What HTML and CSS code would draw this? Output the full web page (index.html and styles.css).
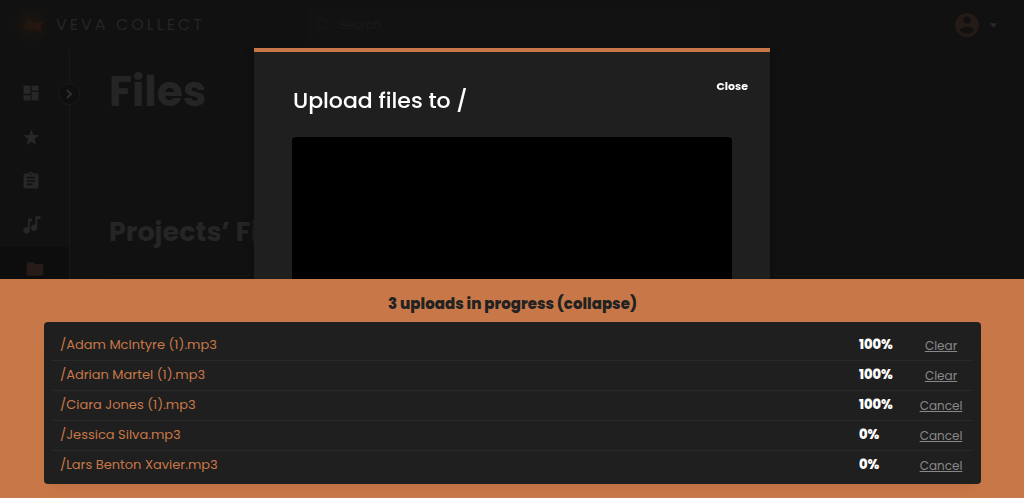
FILE: index.html
```html
<!DOCTYPE html>
<html lang="en">
<head>
<meta charset="utf-8">
<meta name="viewport" content="width=device-width, initial-scale=1">
<title>Files - Veva Collect</title>
<link rel="stylesheet" href="styles.css">
</head>
<body>
<div class="app">
  <header class="topbar">
    <a class="brand" href="#">
      <svg class="brand-mark" viewBox="0 0 48 48" aria-hidden="true">
        <defs>
          <radialGradient id="glow"><stop offset="0" stop-color="#1e150e"/><stop offset="0.5" stop-color="#16120f"/><stop offset="1" stop-color="#111111"/></radialGradient>
          <linearGradient id="spark"><stop offset="0" stop-color="#20180e"/><stop offset="1" stop-color="#271510"/></linearGradient>
        </defs>
        <circle cx="31" cy="24" r="22" fill="url(#glow)"/>
        <path d="M21 25l6-2-1-6 7 5 11-1-4 4 2 7-7-4-4 1-5-2z" fill="url(#spark)"/>
      </svg>
      <span class="brand-name">VEVA COLLECT</span>
    </a>
    <div class="search">
      <svg class="search-icon" viewBox="0 0 14 14" aria-hidden="true"><circle cx="6" cy="6" r="5"/><path d="M10 10l3 3"/></svg>
      <input class="search-input" type="search" placeholder="Search" aria-label="Search">
    </div>
    <button class="account" type="button" aria-label="Account menu">
      <svg class="avatar" viewBox="2 2 20 20" aria-hidden="true"><path d="M12 2a10 10 0 100 20 10 10 0 000-20zm0 3a3 3 0 110 6 3 3 0 010-6zm0 14.200c-2.500 0-4.710-1-6-2.700.03-1.990 4-3.080 6-3.080s5.970 1.090 6 3.080a7.200 7.200 0 01-6 2.700z"/></svg>
      <svg class="caret" viewBox="0 0 8 5" aria-hidden="true"><path d="M0 0h8L4 5z"/></svg>
    </button>
  </header>
  <div class="body">
    <nav class="sidebar" aria-label="Main">
      <a class="nav-item" href="#" aria-label="Dashboard"><svg class="icon" viewBox="0 0 24 24"><path d="M3 13h8.400V3H3zm0 8h8.400v-6.200H3zm9.800 0H21V10.800h-8.200zm0-18v6.200H21V3z"/></svg></a>
      <a class="nav-item" href="#" aria-label="Favorites"><svg class="icon" viewBox="0 0 24 24"><path d="M12.500 17.600l5.800 4-2-7.100 5.800-4.500-7.200-.3L12.500 2.800 10.100 9.700l-7.200.3 5.800 4.500-2 7.100z"/></svg></a>
      <a class="nav-item" href="#" aria-label="Tasks"><svg class="icon" viewBox="0 0 24 24"><path d="M19 3h-4.180C14.400 1.840 13.300 1 12 1s-2.400.84-2.820 2H5c-1.100 0-2 .9-2 2v14c0 1.100.9 2 2 2h14c1.100 0 2-.9 2-2V5c0-1.100-.9-2-2-2zm-7 0c.55 0 1 .45 1 1s-.45 1-1 1-1-.45-1-1 .45-1 1-1zm2 14H7v-2h7v2zm3-4H7v-2h10v2zm0-4H7V7h10v2z"/></svg></a>
      <a class="nav-item" href="#" aria-label="Music"><svg class="icon" viewBox="0 0 24 24"><path d="M8.400 4.200h4.800v3.200h-2.600v10.800a3.900 3.900 0 11-2.200-3.500zM17.200 1.400h6.200v3.400h-3.800v10.400a3.900 3.900 0 11-2.400-3.600z"/></svg></a>
      <a class="nav-item nav-item-active" href="#" aria-label="Files" aria-current="page"><svg class="icon" viewBox="0 0 24 24"><path d="M10 4H4a2 2 0 00-2 2v12c0 1.100.9 2 2 2h16a2 2 0 002-2V8a2 2 0 00-2-2h-8z"/></svg></a>
      <button class="expand" type="button" aria-label="Expand menu"><svg class="chevron" viewBox="0 0 6 10"><path d="M1 1l4 4-4 4"/></svg></button>
    </nav>
    <main class="content">
      <h1 class="page-title">Files</h1>
      <h2 class="section-title">Projects’ Files</h2>
    </main>
  </div>
</div>

<section class="modal" role="dialog" aria-labelledby="modal-title">
  <div class="modal-head">
    <h2 class="modal-title" id="modal-title">Upload files to /</h2>
    <button class="close" type="button">Close</button>
  </div>
  <div class="dropzone"></div>
</section>

<section class="uploads" aria-label="Uploads">
  <button class="uploads-toggle" type="button">3 uploads in progress (collapse)</button>
  <div class="uploads-box">
    <table class="upload-table">
      <tbody>
        <tr><td class="file">/Adam McIntyre (1).mp3</td><td class="percent">100%</td><td class="action"><button class="action-link" type="button">Clear</button></td></tr>
        <tr><td class="file">/Adrian Martel (1).mp3</td><td class="percent">100%</td><td class="action"><button class="action-link" type="button">Clear</button></td></tr>
        <tr><td class="file">/Ciara Jones (1).mp3</td><td class="percent">100%</td><td class="action"><button class="action-link" type="button">Cancel</button></td></tr>
        <tr><td class="file">/Jessica Silva.mp3</td><td class="percent">0%</td><td class="action"><button class="action-link" type="button">Cancel</button></td></tr>
        <tr><td class="file">/Lars Benton Xavier.mp3</td><td class="percent">0%</td><td class="action"><button class="action-link" type="button">Cancel</button></td></tr>
      </tbody>
    </table>
  </div>
</section>
</body>
</html>
```
FILE: styles.css
```css
* { box-sizing: border-box; }

body {
  margin: 0;
  background: #111111;
  color: #252525;
  font-family: Poppins, Inter, sans-serif;
  overflow: hidden;
}

button {
  padding: 0;
  border: 0;
  background: none;
  color: inherit;
  font: inherit;
  cursor: pointer;
}

h1, h2 { margin: 0; }

.app {
  display: flex;
  flex-direction: column;
  height: 100vh;
}

/* Top bar */
.topbar {
  display: grid;
  grid-template-columns: 308px minmax(0, 412px) 1fr;
  align-items: center;
  flex: none;
  height: 50px;
}

.brand {
  display: flex;
  align-items: center;
  gap: 8px;
  color: #252525;
  text-decoration: none;
}

.brand-mark {
  width: 48px;
  height: 48px;
}

.brand-name {
  font-size: 16px;
  font-weight: 400;
  line-height: 20px;
  letter-spacing: 3px;
}

.search {
  display: flex;
  align-items: center;
  gap: 8px;
  height: 32px;
  padding: 0 9px;
  background: #121212;
}

.search-icon {
  flex: none;
  width: 14px;
  height: 14px;
  fill: none;
  stroke: #191919;
}

.search-input {
  flex: 1;
  min-width: 0;
  padding: 0;
  border: 0;
  background: none;
  color: #1a1a1a;
  font: 12px/20px Poppins, Inter, sans-serif;
}

.search-input::placeholder { color: #1a1a1a; }

.account {
  display: flex;
  align-items: center;
  justify-self: end;
  gap: 11px;
  padding-right: 27px;
}

.avatar {
  width: 24px;
  height: 24px;
  fill: #251b16;
}

.caret {
  width: 7px;
  height: 5px;
  fill: #292929;
}

/* Sidebar and page */
.body {
  display: flex;
  flex: 1;
  min-height: 0;
}

.sidebar {
  position: relative;
  flex: none;
  width: 70px;
  padding-top: 21px;
  border-right: 1px solid #191919;
}

.nav-item {
  display: flex;
  align-items: center;
  height: 44px;
  padding-left: 21px;
}

.icon {
  width: 20px;
  height: 20px;
  fill: #272727;
}

.nav-item-active {
  padding-left: 25px;
  background: #0d0d0d;
}

.nav-item-active .icon { fill: #261b16; }

.expand {
  position: absolute;
  top: 33px;
  right: -11px;
  display: grid;
  place-items: center;
  width: 22px;
  height: 22px;
  border: 1px solid #211813;
  border-radius: 50%;
  background: #0f0f0f;
}

.chevron {
  width: 6px;
  height: 10px;
  fill: none;
  stroke: #2e2e2e;
  stroke-width: 2;
}

.content {
  flex: 1;
  padding: 18px 24px 0 39px;
}

.page-title {
  font-size: 42px;
  line-height: 48px;
}

.section-title {
  margin-top: 96px;
  padding-bottom: 23px;
  border-bottom: 1px solid #161616;
  font-size: 27px;
  line-height: 40px;
}

/* Upload dialog */
.modal {
  position: fixed;
  top: 48px;
  right: 0;
  bottom: 0;
  left: 0;
  display: flex;
  flex-direction: column;
  width: 50.4%;
  margin: 0 auto;
  border-top: 4px solid #c87848;
  background: #1f1f1f;
  box-shadow: 0 4px 8px #0e0e0e;
}

.modal-head {
  display: flex;
  justify-content: space-between;
  align-items: flex-start;
  padding: 24px 22px 11px 39px;
}

.modal-title {
  color: #ffffff;
  font-size: 22px;
  font-weight: 500;
  line-height: 50px;
}

.close {
  color: #ffffff;
  font-size: 11px;
  font-weight: 700;
  line-height: 20px;
}

.dropzone {
  flex: 1;
  margin: 0 38px;
  border-radius: 4px;
  background: #000000;
}

/* Upload progress */
.uploads {
  position: fixed;
  right: 0;
  bottom: 0;
  left: 0;
  display: flex;
  flex-direction: column;
  padding: 15px 43px 14px 44px;
  background: #c87848;
}

.uploads-toggle {
  align-self: center;
  margin-bottom: 8px;
  color: #222222;
  font-size: 15px;
  font-weight: 800;
  line-height: 20px;
}

.uploads-box {
  padding: 8px 8px 4px;
  border-radius: 4px;
  background: #1f1f1f;
  box-shadow: 0 12px 10px -8px #bd7044;
}

.upload-table {
  width: 100%;
  border-collapse: collapse;
}

.upload-table td {
  height: 30px;
  padding: 0;
  font-size: 13px;
  line-height: 20px;
}

.upload-table tr + tr td { border-top: 1px solid #292929; }

.upload-table .file {
  padding-left: 8px;
  color: #c87848;
  font-weight: 400;
}

.upload-table .percent {
  width: 50px;
  color: #ffffff;
  font-weight: 800;
}

.upload-table .action {
  width: 64px;
  padding-top: 2px;
  text-align: center;
}

.action-link {
  color: #888888;
  font-size: 12px;
  line-height: 20px;
  text-decoration: underline;
}
```
